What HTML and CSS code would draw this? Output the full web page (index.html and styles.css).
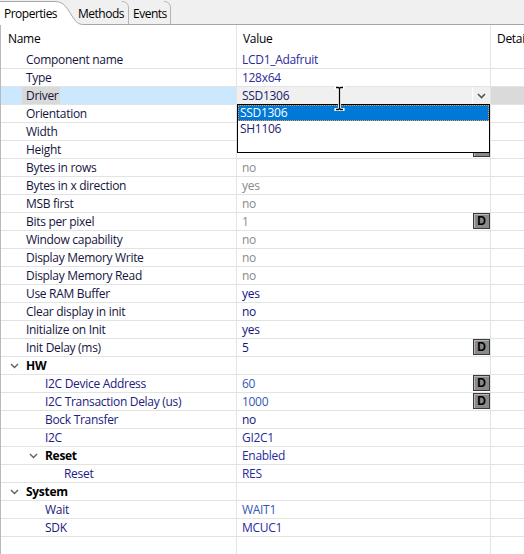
FILE: index.html
```html
<!DOCTYPE html>
<html>
<head>
<meta charset="utf-8">
<link rel="stylesheet" href="styles.css">
</head>
<body>
<div class="tabbar">
  <svg class="tabshape" width="524" height="25" viewBox="0 0 524 25">
    <rect x="0" y="0" width="524" height="25" fill="#f0f0f0"/>
    <path d="M0,25 L0,1 L55,1 C66,1 68,10 72,16 C76,22 78,24 84,24 L84,25 Z" fill="#ffffff"/>
    <path d="M0,1.5 L55,1.5 C65,1.5 68,10 72,16 C76,22 78,24.5 84,24.5 L524,24.5" fill="none" stroke="#a6a6a6" stroke-width="1"/>
    <path d="M122,1.5 C126,1.5 128.5,4 128.5,8 L128.5,24" fill="none" stroke="#b4b4b4" stroke-width="1"/>
    <path d="M164,1.5 C168,1.5 170.5,4 170.5,8 L170.5,24" fill="none" stroke="#b4b4b4" stroke-width="1"/>
  </svg>
  <span class="tab t-prop">Properties</span>
  <span class="tab t-meth">Methods</span>
  <span class="tab t-ev">Events</span>
</div>

<div class="table">
  <div class="row head"><div class="c name">Name</div><div class="c val">Value</div><div class="c det">Detai</div></div>

  <div class="row"><div class="c name d1">Component name</div><div class="c val vp">LCD1_Adafruit</div><div class="c det"></div></div>
  <div class="row"><div class="c name d1">Type</div><div class="c val vp">128x64</div><div class="c det"></div></div>
  <div class="row driver"><div class="c name sel"><span class="sellabel">Driver</span></div><div class="c val combo"><span class="ctext">SSD1306</span><span class="carrow"><svg width="9" height="6" viewBox="0 0 9 6"><path d="M1,1 L4.5,4.5 L8,1" fill="none" stroke="#555" stroke-width="1.6"/></svg></span></div><div class="c det seldet"></div></div>
  <div class="row"><div class="c name d1">Orientation</div><div class="c val vn"></div><div class="c det"></div></div>
  <div class="row"><div class="c name d1">Width</div><div class="c val vn"></div><div class="c det"></div></div>
  <div class="row"><div class="c name d1">Height</div><div class="c val vn"><span></span><span class="dbtn"></span></div><div class="c det"></div></div>
  <div class="row"><div class="c name d1">Bytes in rows</div><div class="c val vg">no</div><div class="c det"></div></div>
  <div class="row"><div class="c name d1">Bytes in x direction</div><div class="c val vg">yes</div><div class="c det"></div></div>
  <div class="row"><div class="c name d1">MSB first</div><div class="c val vg">no</div><div class="c det"></div></div>
  <div class="row"><div class="c name d1">Bits per pixel</div><div class="c val vg"><span>1</span><span class="dbtn">D</span></div><div class="c det"></div></div>
  <div class="row"><div class="c name d1">Window capability</div><div class="c val vg">no</div><div class="c det"></div></div>
  <div class="row"><div class="c name d1">Display Memory Write</div><div class="c val vg">no</div><div class="c det"></div></div>
  <div class="row"><div class="c name d1">Display Memory Read</div><div class="c val vg">no</div><div class="c det"></div></div>
  <div class="row"><div class="c name d1">Use RAM Buffer</div><div class="c val vn">yes</div><div class="c det"></div></div>
  <div class="row"><div class="c name d1">Clear display in init</div><div class="c val vn">no</div><div class="c det"></div></div>
  <div class="row"><div class="c name d1">Initialize on Init</div><div class="c val vn">yes</div><div class="c det"></div></div>
  <div class="row"><div class="c name d1">Init Delay (ms)</div><div class="c val vn"><span>5</span><span class="dbtn">D</span></div><div class="c det"></div></div>

  <div class="row"><div class="c name g1"><span class="chev"><svg width="9" height="6" viewBox="0 0 9 6"><path d="M1,1 L4.5,4.5 L8,1" fill="none" stroke="#606060" stroke-width="1.4"/></svg></span><b>HW</b></div><div class="c val"></div><div class="c det"></div></div>
  <div class="row"><div class="c name d2">I2C Device Address</div><div class="c val vb"><span>60</span><span class="dbtn">D</span></div><div class="c det"></div></div>
  <div class="row"><div class="c name d2">I2C Transaction Delay (us)</div><div class="c val vb"><span>1000</span><span class="dbtn">D</span></div><div class="c det"></div></div>
  <div class="row"><div class="c name d2">Bock Transfer</div><div class="c val vn">no</div><div class="c det"></div></div>
  <div class="row"><div class="c name d2">I2C</div><div class="c val vp">GI2C1</div><div class="c det"></div></div>
  <div class="row"><div class="c name g2"><span class="chev"><svg width="9" height="6" viewBox="0 0 9 6"><path d="M1,1 L4.5,4.5 L8,1" fill="none" stroke="#606060" stroke-width="1.4"/></svg></span><b>Reset</b></div><div class="c val vp">Enabled</div><div class="c det"></div></div>
  <div class="row"><div class="c name d3">Reset</div><div class="c val vp">RES</div><div class="c det"></div></div>

  <div class="row"><div class="c name g1"><span class="chev"><svg width="9" height="6" viewBox="0 0 9 6"><path d="M1,1 L4.5,4.5 L8,1" fill="none" stroke="#606060" stroke-width="1.4"/></svg></span><b>System</b></div><div class="c val"></div><div class="c det"></div></div>
  <div class="row"><div class="c name d2">Wait</div><div class="c val vb">WAIT1</div><div class="c det"></div></div>
  <div class="row"><div class="c name d2">SDK</div><div class="c val vp">MCUC1</div><div class="c det"></div></div>

  <div class="row filler"><div class="c name"></div><div class="c val"></div><div class="c det"></div></div>

  <div class="dropdown">
    <div class="ditem dsel">SSD1306</div>
    <div class="ditem">SH1106</div>
  </div>

  <svg class="ibeam" width="11" height="25" viewBox="0 0 11 25">
    <path d="M2,1.5 L4.5,1.5 L5.5,2.5 L6.5,1.5 L9,1.5 M5.5,2.5 L5.5,22.5 M2,23.5 L4.5,23.5 L5.5,22.5 L6.5,23.5 L9,23.5" fill="none" stroke="#ffffff" stroke-width="3.2" stroke-linecap="square"/>
    <path d="M2,1.5 L4.5,1.5 L5.5,2.5 L6.5,1.5 L9,1.5 M5.5,2.5 L5.5,22.5 M2,23.5 L4.5,23.5 L5.5,22.5 L6.5,23.5 L9,23.5" fill="none" stroke="#000000" stroke-width="1.3"/>
  </svg>
</div>
</body>
</html>
```

FILE: styles.css
```css
html, body {
  margin: 0;
  padding: 0;
}
body {
  width: 524px;
  height: 554px;
  overflow: hidden;
  background: #ffffff;
  font-family: "Open Sans", "Noto Sans", sans-serif;
  font-size: 12px;
  letter-spacing: -0.3px;
  color: #141440;
  display: flex;
  flex-direction: column;
}

/* ---------- tabs ---------- */
.tabbar {
  position: relative;
  height: 25px;
  flex: 0 0 25px;
  display: flex;
  align-items: center;
}
.tabshape {
  position: absolute;
  left: 0;
  top: 0;
}
.tab {
  position: relative;
  color: #000;
  line-height: 16px;
  padding-top: 3px;
  white-space: nowrap;
  letter-spacing: -0.5px;
}
.t-prop { width: 74px; padding-left: 4px; }
.t-meth { width: 55px; }
.t-ev { width: 40px; }

/* ---------- table ---------- */
.table {
  position: relative;
  flex: 1;
  display: flex;
  flex-direction: column;
  border-left: 1px solid #b9b9b9;
}
.row {
  display: grid;
  grid-template-columns: 236px 254px 1fr;
  height: 18px;
  flex: 0 0 18px;
}
.c {
  box-sizing: border-box;
  border-bottom: 1px solid #e3e3e3;
  line-height: 17px;
  white-space: nowrap;
  overflow: hidden;
  display: flex;
  align-items: flex-start;
}
.name { border-right: 1px solid #e3e3e3; }
.val {
  border-right: 1px solid #e3e3e3;
  padding-left: 5px;
  justify-content: space-between;
}
.det { padding-left: 6px; }

.row.head {
  height: 26px;
  flex: 0 0 26px;
}
.row.head .c {
  border-bottom: none;
  padding-top: 4px;
  line-height: 20px;
  color: #000;
}
.row.head .name { padding-left: 7px; }
.row.head .val { padding-left: 6px; }

.row.filler {
  flex: 1;
}
.row.filler .c { border-bottom: none; }

/* indentation */
.d1 { padding-left: 25px; }
.d2 { padding-left: 44px; color: #20207e; }
.d3 { padding-left: 63px; color: #20207e; }
.g1 { padding-left: 6px; color: #000; }
.g2 { padding-left: 25px; color: #000; }
.chev {
  width: 19px;
  flex: 0 0 19px;
  height: 17px;
  display: flex;
  align-items: center;
  padding-left: 3px;
  box-sizing: border-box;
}
.chev svg { display: block; margin-top: 1px; }
b { font-weight: 700; }

/* value colours */
.vp { color: #2a2a9c; }
.vn { color: #121282; }
.vb { color: #3558b4; }
.vg { color: #8a8a8a; }

/* D button */
.dbtn {
  box-sizing: border-box;
  width: 17px;
  height: 16px;
  flex: 0 0 17px;
  background: #8a8a8a;
  border: 1px solid #3a3a3a;
  box-shadow: inset 1px 1px 0 #b8b8b8;
  color: #000;
  font-family: "Liberation Sans", Arial, sans-serif;
  font-weight: 700;
  font-size: 12px;
  letter-spacing: 0;
  line-height: 14px;
  text-align: center;
}

/* selected driver row */
.driver .sel {
  background: #cce8ff;
  padding-left: 21px;
}
.sellabel {
  background: #d9d9d9;
  padding: 0 2px 0 4px;
  color: #141440;
}
.combo {
  background: #f0f0f0;
  padding-right: 1px;
  color: #1b1b6e;
}
.ctext { flex: 1; }
.carrow {
  width: 16px;
  flex: 0 0 16px;
  height: 17px;
  border-left: 1px solid #ffffff;
  display: flex;
  align-items: center;
  justify-content: center;
}
.carrow svg { display: block; }
.seldet { background: #dadada; }

/* dropdown list */
.dropdown {
  position: absolute;
  left: 236px;
  top: 79px;
  width: 253px;
  height: 49px;
  box-sizing: border-box;
  border: 1px solid #000;
  background: #ffffff;
  padding: 0;
}
.ditem {
  height: 16px;
  line-height: 15px;
  padding-left: 2px;
  color: #1b1b6e;
  white-space: nowrap;
  box-sizing: border-box;
}
.ditem.dsel {
  background: #0078d7;
  color: #ffffff;
  outline: 1px dotted #f09a3a;
  outline-offset: -1px;
}

/* mouse cursor */
.ibeam {
  position: absolute;
  left: 333px;
  top: 61px;
}
```
